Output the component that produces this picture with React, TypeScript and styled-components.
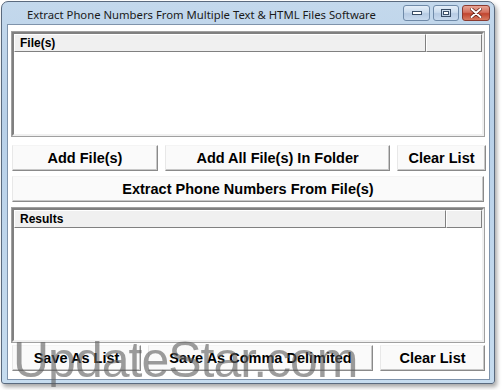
import React from "react";
import styled, { createGlobalStyle } from "styled-components";

const Global = createGlobalStyle`
  html, body { margin: 0; padding: 0; background: #ffffff; }
  body { width: 504px; height: 390px; overflow: hidden; }
`;

const Page = styled.div`
  position: relative;
  width: 504px;
  height: 390px;
  padding: 1px 0 0 1px;
  box-sizing: border-box;
`;

const Window = styled.div`
  width: 494px;
  height: 383px;
  box-sizing: border-box;
  border: 1px solid #5a6a7e;
  border-radius: 7px 7px 3px 3px;
  background: linear-gradient(180deg, #c3d8ec 0%, #b8d0e8 30%, #c6dcef 100%);
  box-shadow: 2px 3px 4px rgba(0, 0, 0, 0.35);
  display: flex;
  flex-direction: column;
  padding: 0 4px 3px 5px;
`;

const TitleBar = styled.div`
  height: 22px;
  display: flex;
  align-items: center;
  padding-left: 20px;
`;

const Title = styled.div`
  flex: 1;
  font-family: "Noto Sans", "DejaVu Sans", sans-serif;
  font-size: 11.3px;
  color: #1a1a1a;
  white-space: nowrap;
  padding-top: 2px;
`;

const Caption = styled.div`
  display: flex;
  gap: 3px;
  align-self: flex-start;
  margin-top: 3px;
`;

const CapBtn = styled.div<{ $close?: boolean; $w: number }>`
  width: ${(p) => p.$w}px;
  height: 16px;
  box-sizing: border-box;
  border: 1px solid ${(p) => (p.$close ? "#8a3a30" : "#6f8aa8")};
  border-radius: 3px;
  background: ${(p) =>
    p.$close
      ? "linear-gradient(180deg, #e8a595 0%, #d36f5d 45%, #c0452f 55%, #d77a60 100%)"
      : "linear-gradient(180deg, #e4eef8 0%, #cbdcee 45%, #b6cbe3 55%, #c8daee 100%)"};
  display: flex;
  align-items: center;
  justify-content: center;
`;

const Client = styled.div`
  flex: 1;
  background: #ffffff;
  border: 1px solid #7f93ab;
  display: flex;
  flex-direction: column;
  padding: 7px 5px 0 4px;
`;

const ListBox = styled.div<{ $h: number; $mt?: number }>`
  height: ${(p) => p.$h}px;
  flex: none;
  margin-top: ${(p) => p.$mt ?? 0}px;
  box-sizing: border-box;
  border: 2px solid;
  border-color: #808080 #f0f0f0 #f0f0f0 #808080;
  outline: 1px solid #a0a0a0;
  background: #ffffff;
  display: flex;
  flex-direction: column;
`;

const HeaderRow = styled.div`
  display: flex;
  height: 18px;
`;

const HeaderCell = styled.div<{ $w?: number }>`
  ${(p) => (p.$w ? `width: ${p.$w}px;` : "flex: 1;")}
  box-sizing: border-box;
  background: #f0f0f0;
  border: 1px solid;
  border-color: #ffffff #808080 #808080 #ffffff;
  font-family: "Liberation Sans", Arial, sans-serif;
  font-weight: bold;
  font-size: 12px;
  color: #000;
  display: flex;
  align-items: center;
  padding-left: 5px;
`;

const ButtonRow = styled.div<{ $mt: number; $cols: string }>`
  display: grid;
  grid-template-columns: ${(p) => p.$cols};
  column-gap: 7px;
  margin-top: ${(p) => p.$mt}px;
  height: 26px;
  flex: none;
`;

const Button = styled.div`
  box-sizing: border-box;
  border: 1px solid;
  border-color: #f4f4f4 #8a8a8a #8a8a8a #e8e8e8;
  box-shadow: inset -1px -1px 0 #c8c8c8;
  background: #fafafa;
  font-family: "Liberation Sans", Arial, sans-serif;
  font-weight: bold;
  font-size: 14.5px;
  color: #000;
  display: flex;
  align-items: center;
  justify-content: center;
  white-space: nowrap;
`;

const Watermark = styled.div`
  position: absolute;
  left: 13px;
  top: 331px;
  font-family: "Liberation Sans", Arial, sans-serif;
  font-size: 50px;
  letter-spacing: -1px;
  color: rgba(95, 95, 95, 0.62);
  pointer-events: none;
  white-space: nowrap;
`;

const MinIcon = () => (
  <svg width="10" height="6" viewBox="0 0 10 6">
    <rect x="0.5" y="1.5" width="9" height="3" fill="#ffffff" stroke="#3a4e66" />
  </svg>
);
const MaxIcon = () => (
  <svg width="10" height="8" viewBox="0 0 10 8">
    <rect x="0.5" y="0.5" width="9" height="7" fill="none" stroke="#3a4e66" />
    <rect x="2.5" y="2.5" width="5" height="3" fill="#ffffff" stroke="#3a4e66" />
  </svg>
);
const CloseIcon = () => (
  <svg width="12" height="10" viewBox="0 0 12 10">
    <path d="M1.5 1 L10.5 9 M10.5 1 L1.5 9" stroke="#5a1a10" strokeWidth="3.4" strokeLinecap="round" />
    <path d="M1.5 1 L10.5 9 M10.5 1 L1.5 9" stroke="#ffffff" strokeWidth="2" strokeLinecap="round" />
  </svg>
);

export default function App() {
  return (
    <Page>
      <Global />
      <Window>
        <TitleBar>
          <Title>Extract Phone Numbers From Multiple Text &amp; HTML Files Software</Title>
          <Caption>
            <CapBtn $w={27}>
              <MinIcon />
            </CapBtn>
            <CapBtn $w={26}>
              <MaxIcon />
            </CapBtn>
            <CapBtn $w={28} $close>
              <CloseIcon />
            </CapBtn>
          </Caption>
        </TitleBar>
        <Client>
          <ListBox $h={104}>
            <HeaderRow>
              <HeaderCell>File(s)</HeaderCell>
              <HeaderCell $w={56} />
            </HeaderRow>
          </ListBox>
          <ButtonRow $mt={9} $cols="146px 225px 89px">
            <Button>Add File(s)</Button>
            <Button>Add All File(s) In Folder</Button>
            <Button>Clear List</Button>
          </ButtonRow>
          <ButtonRow $mt={5} $cols="1fr">
            <Button>Extract Phone Numbers From File(s)</Button>
          </ButtonRow>
          <ListBox $h={134} $mt={6}>
            <HeaderRow>
              <HeaderCell>Results</HeaderCell>
              <HeaderCell $w={36} />
            </HeaderRow>
          </ListBox>
          <ButtonRow $mt={3} $cols="129px 225px 105px">
            <Button>Save As List</Button>
            <Button>Save As Comma Delimited</Button>
            <Button>Clear List</Button>
          </ButtonRow>
        </Client>
      </Window>
      <Watermark>UpdateStar.com</Watermark>
    </Page>
  );
}
